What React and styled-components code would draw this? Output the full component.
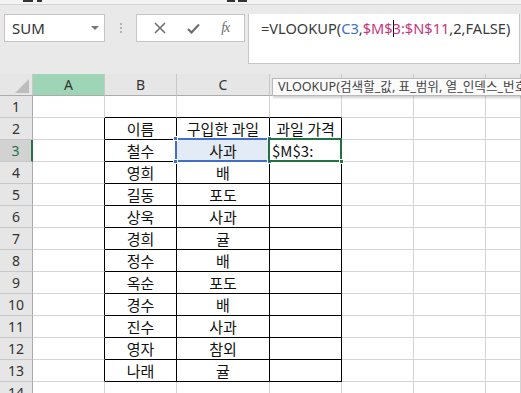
import React from 'react';
import styled, { createGlobalStyle } from 'styled-components';

const GlobalStyle = createGlobalStyle`
  html, body { margin: 0; padding: 0; background: #e9e9e9; }
  * { box-sizing: border-box; }
`;

const COLS = ['A', 'B', 'C', 'D', 'E', 'F', 'G'];
const COL_WIDTHS = '33px 72px 72px 93px 72px 72px 72px 1fr';

const ROWS = [
  ['', '', '', ''],
  ['', '이름', '구입한 과일', '과일 가격'],
  ['', '철수', '사과', '$M$3:'],
  ['', '영희', '배', ''],
  ['', '길동', '포도', ''],
  ['', '상욱', '사과', ''],
  ['', '경희', '귤', ''],
  ['', '정수', '배', ''],
  ['', '옥순', '포도', ''],
  ['', '경수', '배', ''],
  ['', '진수', '사과', ''],
  ['', '영자', '참외', ''],
  ['', '나래', '귤', ''],
  ['', '', '', ''],
];

const Page = styled.div`
  position: relative;
  width: 521px;
  height: 393px;
  overflow: hidden;
  background: #e9e9e9;
  font-family: "Noto Sans", "Noto Sans CJK KR", sans-serif;
`;

const RibbonEdge = styled.div`
  height: 5px;
  background: #f3f3f3;
  border-bottom: 1px solid #d4d4d4;
  display: flex;
  align-items: flex-start;
`;

const Tick = styled.span`
  display: block;
  height: 2px;
  width: ${(p) => p.$w}px;
  margin-left: ${(p) => p.$ml}px;
  background: #333;
`;

const FormulaBar = styled.div`
  display: flex;
  align-items: flex-start;
  padding: 9px 1px 0 4px;
`;

const NameBox = styled.div`
  width: 101px;
  height: 28px;
  background: #fff;
  border: 1px solid #c6c6c6;
  display: flex;
  align-items: center;
  justify-content: space-between;
  padding: 0 5px 0 7px;
  font-size: 15px;
  color: #333;
`;

const Caret = styled.span`
  width: 0;
  height: 0;
  border-left: 4px solid transparent;
  border-right: 4px solid transparent;
  border-top: 4px solid #777;
`;

const Dots = styled.div`
  width: 31px;
  height: 28px;
  display: flex;
  flex-direction: column;
  align-items: center;
  justify-content: center;
  gap: 2px;

  span {
    width: 2px;
    height: 2px;
    background: #b3b3b3;
  }
`;

const ButtonBox = styled.div`
  width: 109px;
  height: 28px;
  background: #fff;
  border: 1px solid #c6c6c6;
  display: flex;
  align-items: center;
  justify-content: space-around;
  padding: 0 4px 0 6px;
  color: #6e6e6e;
`;

const Fx = styled.span`
  font-family: "Liberation Serif", serif;
  font-style: italic;
  font-size: 14px;
  color: #6e6e6e;
  letter-spacing: -1px;
`;

const FormulaInput = styled.div`
  flex: 1;
  height: 50px;
  margin-left: 3px;
  background: #fff;
  border: 1px solid #c6c6c6;
  border-top: none;
  padding: 4px 0 0 12px;
  font-size: 14.6px;
  color: #3a3a3a;
  white-space: nowrap;
  overflow: hidden;
`;

const Ref = styled.span`
  color: ${(p) => p.$color};
`;

const Cursor = styled.span`
  display: inline-block;
  width: 1px;
  height: 17px;
  background: #000;
  vertical-align: -3px;
  margin: 0 -1px 0 0;
`;

const Sheet = styled.div`
  margin-top: 10px;
  display: grid;
  grid-template-columns: ${COL_WIDTHS};
  grid-auto-rows: 22px;
`;

const Corner = styled.div`
  background: #e6e6e6;
  border-right: 1px solid #c8c8c8;
  border-bottom: 1px solid #ababab;
  position: relative;

  &::after {
    content: '';
    position: absolute;
    right: 3px;
    bottom: 2px;
    border-left: 14px solid transparent;
    border-bottom: 14px solid #bdbdbd;
  }
`;

const ColHead = styled.div`
  background: ${(p) => (p.$active ? '#9fd5b7' : '#e6e6e6')};
  border-right: 1px solid #c8c8c8;
  border-bottom: 1px solid #ababab;
  display: flex;
  align-items: center;
  justify-content: center;
  font-size: 14px;
  color: #333;
`;

const RowHead = styled.div`
  background: ${(p) => (p.$active ? '#d2d2d2' : '#e6e6e6')};
  border-right: ${(p) => (p.$active ? '2px solid #217346' : '1px solid #ababab')};
  border-bottom: 1px solid #c8c8c8;
  display: flex;
  align-items: center;
  justify-content: center;
  font-size: 14px;
  color: ${(p) => (p.$active ? '#217346' : '#333')};
`;

const Cell = styled.div`
  position: relative;
  background: ${(p) => (p.$ref ? '#e3ebf7' : '#fff')};
  border-right: 1px solid ${(p) => (p.$blackRight ? '#000' : '#d4d4d4')};
  border-bottom: 1px solid ${(p) => (p.$blackBottom ? '#000' : '#d4d4d4')};
  display: flex;
  align-items: center;
  justify-content: ${(p) => (p.$left ? 'flex-start' : 'center')};
  padding-left: ${(p) => (p.$left ? '2px' : '0')};
  font-family: "Noto Sans CJK KR", sans-serif;
  font-size: 15px;
  color: #111;
  white-space: nowrap;
`;

const Frame = styled.div`
  position: absolute;
  left: -2px;
  top: -2px;
  right: -1px;
  bottom: -1px;
  border: 2px solid ${(p) => p.$color};
  pointer-events: none;
  z-index: 2;
`;

const Handle = styled.span`
  position: absolute;
  width: 5px;
  height: 5px;
  background: ${(p) => p.$color};
  border: 1px solid #fff;
  ${(p) => (p.$y === 'top' ? 'top: -4px;' : 'bottom: -4px;')}
  ${(p) => (p.$x === 'left' ? 'left: -4px;' : 'right: -4px;')}
`;

const Tooltip = styled.div`
  position: absolute;
  left: 272px;
  top: 78px;
  width: 262px;
  height: 18px;
  background: #fbfbfb;
  border: 1px solid #b9b9b9;
  box-shadow: 1px 2px 2px rgba(0, 0, 0, 0.18);
  padding-left: 5px;
  font-family: "Noto Sans", "Noto Sans CJK KR", sans-serif;
  font-size: 12.6px;
  line-height: 16px;
  color: #444;
  white-space: nowrap;
  overflow: hidden;
  z-index: 5;
`;

const CloseIcon = () => (
  <svg width="12" height="12" viewBox="0 0 12 12">
    <path d="M1 1L11 11M11 1L1 11" stroke="#707070" strokeWidth="1.6" />
  </svg>
);

const CheckIcon = () => (
  <svg width="13" height="11" viewBox="0 0 13 11">
    <path d="M1 6L4.5 9.5L12 1.5" stroke="#707070" strokeWidth="2.2" fill="none" />
  </svg>
);

const inTable = (r, c) => r >= 2 && r <= 13 && c >= 2 && c <= 4;

const App = () => {
  return (
    <Page>
      <GlobalStyle />
      <RibbonEdge>
        <Tick $w={10} $ml={23} />
        <Tick $w={5} $ml={4} />
        <Tick $w={8} $ml={185} />
        <Tick $w={9} $ml={3} />
      </RibbonEdge>

      <FormulaBar>
        <NameBox>
          SUM
          <Caret />
        </NameBox>
        <Dots>
          <span />
          <span />
          <span />
        </Dots>
        <ButtonBox>
          <CloseIcon />
          <CheckIcon />
          <Fx>fx</Fx>
        </ButtonBox>
        <FormulaInput>
          =VLOOKUP(<Ref $color="#3a6fc4">C3</Ref>,<Ref $color="#c2397a">$M$<Cursor />3:$N$11</Ref>,2,FALSE)
        </FormulaInput>
      </FormulaBar>

      <Sheet>
        <Corner />
        {COLS.map((c, i) => (
          <ColHead key={c} $active={i === 0}>{c}</ColHead>
        ))}
        {ROWS.map((row, ri) => {
          const r = ri + 1;
          return (
            <React.Fragment key={r}>
              <RowHead $active={r === 3}>{r}</RowHead>
              {COLS.map((col, ci) => {
                const c = ci + 1;
                const text = row[ci] || '';
                const blackRight = inTable(r, c) || (c === 1 && r >= 2 && r <= 13);
                const blackBottom = inTable(r, c) || (r === 1 && c >= 2 && c <= 4);
                const isRef = r === 3 && c === 3;
                const isActive = r === 3 && c === 4;
                return (
                  <Cell
                    key={col}
                    $blackRight={blackRight}
                    $blackBottom={blackBottom}
                    $ref={isRef}
                    $left={isActive}
                  >
                    {text}
                    {isRef && (
                      <Frame $color="#3f6fc6">
                        <Handle $color="#3f6fc6" $x="left" $y="top" />
                        <Handle $color="#3f6fc6" $x="right" $y="top" />
                        <Handle $color="#3f6fc6" $x="left" $y="bottom" />
                        <Handle $color="#3f6fc6" $x="right" $y="bottom" />
                      </Frame>
                    )}
                    {isActive && (
                      <Frame $color="#217346">
                        <Handle $color="#217346" $x="right" $y="bottom" />
                      </Frame>
                    )}
                  </Cell>
                );
              })}
            </React.Fragment>
          );
        })}
      </Sheet>

      <Tooltip>VLOOKUP(검색할_값, 표_범위, 열_인덱스_번호, [범위_검색])</Tooltip>
    </Page>
  );
};

export default App;
